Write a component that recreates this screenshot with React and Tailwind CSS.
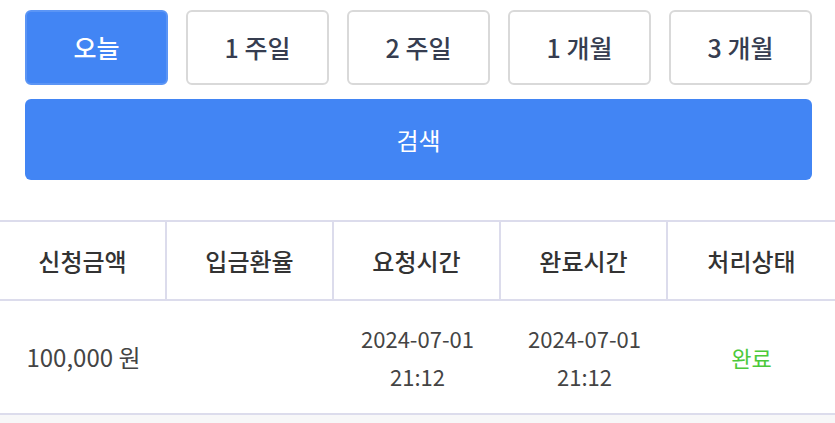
import React from 'react';

const periods = ['오늘', '1 주일', '2 주일', '1 개월', '3 개월'];
const headers = ['신청금액', '입금환율', '요청시간', '완료시간', '처리상태'];

export default function App() {
  return (
    <div
      className="w-[835px] h-[423px] bg-white overflow-hidden"
      style={{ fontFamily: '"Noto Sans CJK KR", "Noto Sans", sans-serif' }}
    >
      <div className="pl-[25px] pr-[23px] pt-[10px]">
        <div className="flex gap-[18px]">
          {periods.map((p, i) => (
            <button
              key={p}
              className={
                i === 0
                  ? 'w-[143px] h-[75px] rounded-[6px] border-2 border-[#5b95f5] bg-[#4285f4] text-white text-[25px] font-medium'
                  : 'w-[143px] h-[75px] rounded-[6px] border-2 border-[#d9d9d9] bg-white text-[#363d50] text-[25px] font-medium'
              }
            >
              {p}
            </button>
          ))}
        </div>
        <button className="mt-[14px] w-full h-[81px] rounded-[6px] bg-[#4285f4] text-white text-[24px]">
          검색
        </button>
      </div>

      <div className="mt-[40px] border-t-2 border-b-2 border-[#dcdcec]">
        <div className="grid grid-cols-5 h-[79px] border-b-2 border-[#dcdcec]">
          {headers.map((h, i) => (
            <div
              key={h}
              className={
                'flex items-center justify-center text-[24px] font-medium text-[#333] ' +
                (i < 4 ? 'border-r-2 border-[#dcdcec]' : '')
              }
            >
              {h}
            </div>
          ))}
        </div>
        <div className="grid grid-cols-5 h-[112px] text-[22px] text-[#444] leading-[38px]">
          <div className="flex items-center justify-center text-[24px]">100,000 원</div>
          <div />
          <div className="flex flex-col items-center justify-center">
            <span>2024-07-01</span>
            <span>21:12</span>
          </div>
          <div className="flex flex-col items-center justify-center">
            <span>2024-07-01</span>
            <span>21:12</span>
          </div>
          <div className="flex items-center justify-center text-[#4cc93a]">완료</div>
        </div>
      </div>
      <div className="h-[20px] bg-[#f7f7f8]" />
    </div>
  );
}
